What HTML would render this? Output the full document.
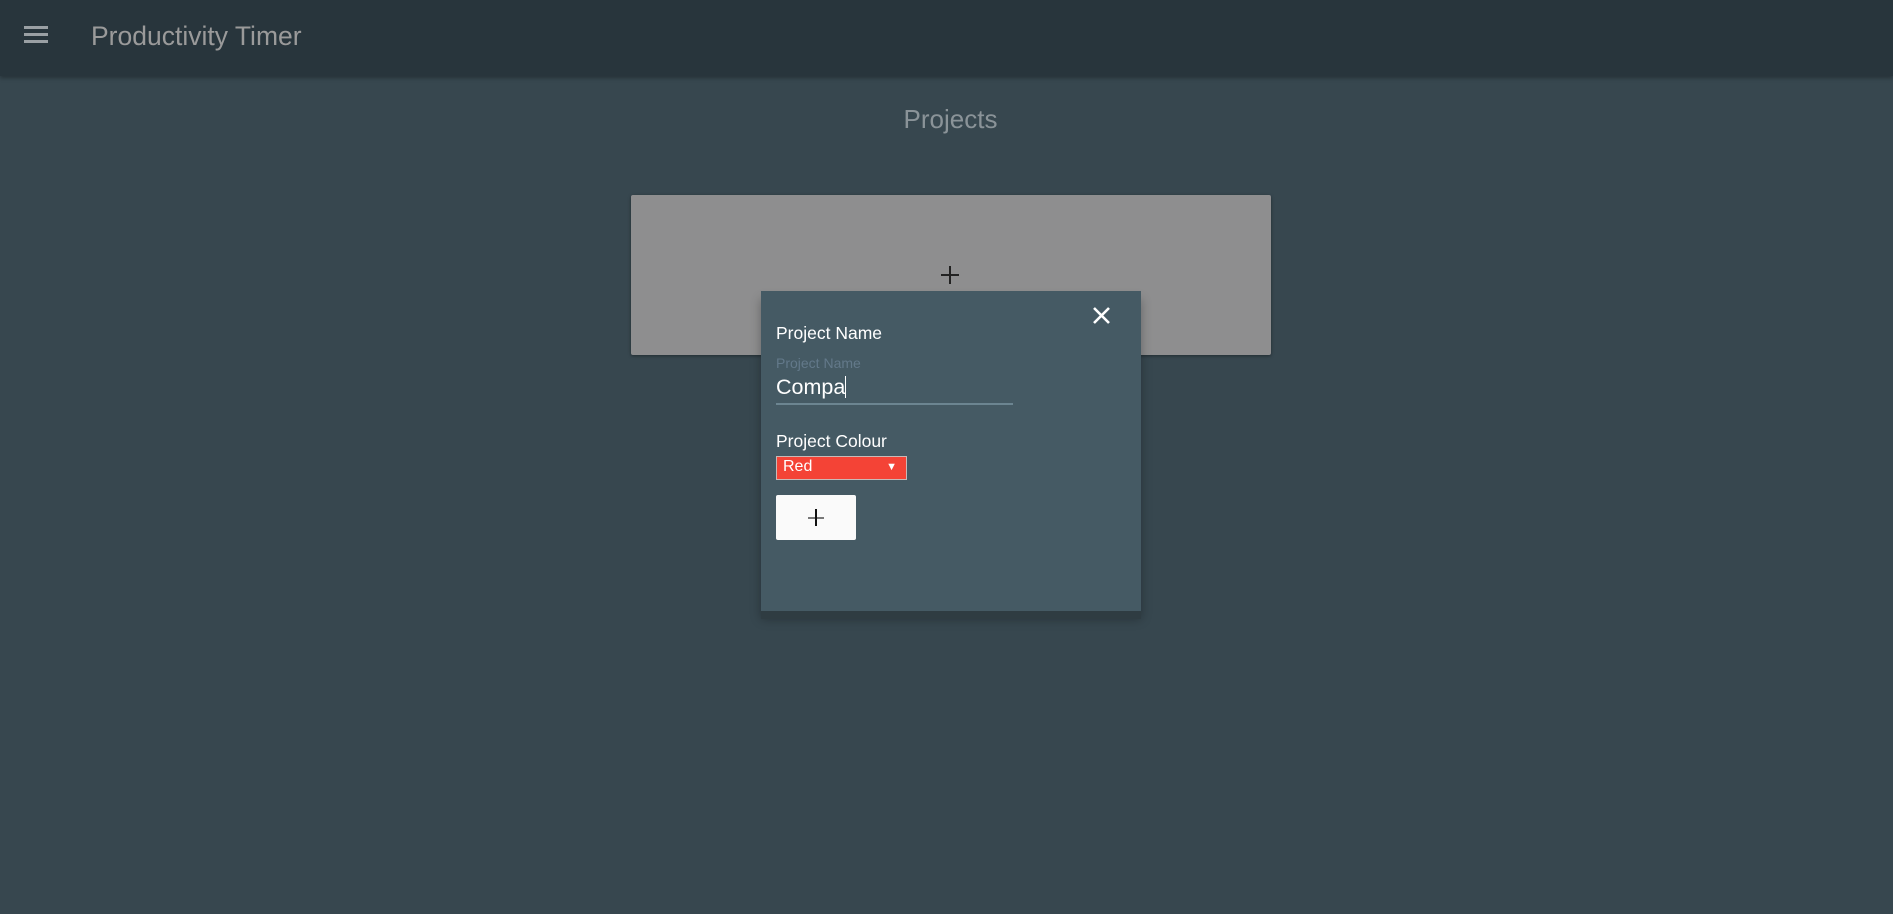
<!DOCTYPE html>
<html><head><style>
*{margin:0;padding:0;box-sizing:border-box}
body{width:1893px;height:914px;background:#37474f;font-family:"Liberation Sans",sans-serif;position:relative;overflow:hidden}
.hdr{position:absolute;left:0;top:0;width:1893px;height:76px;background:#28353c;box-shadow:0 2px 4px rgba(0,0,0,.3)}
.hb{position:absolute;left:24px;width:24px;height:3px;background:#9aa0a4}
.title{position:absolute;left:91px;top:21px;font-size:26.5px;color:#9a9a9a}
.proj{position:absolute;left:0;width:1893px;top:104px;text-align:center;font-size:26px;color:#8a9398;padding-left:8px}
.card{position:absolute;left:631px;top:195px;width:640px;height:160px;background:#8e8e8f;border-radius:2px;box-shadow:0 1px 3px rgba(0,0,0,.4)}
.plus{position:absolute;left:940px;top:265px;width:20px;height:20px}
.modal{position:absolute;left:761px;top:291px;width:380px;height:320px;background:#455a64;box-shadow:0 8px 0 0 #2f3c42,0 8px 10px rgba(0,0,0,.3)}
.lbl{position:absolute;left:15px;font-size:17.5px;color:#fff}
</style></head><body>
<div class="hdr">
<div class="hb" style="top:26px"></div><div class="hb" style="top:33px"></div><div class="hb" style="top:40px"></div>
<div class="title">Productivity Timer</div>
</div>
<div class="proj">Projects</div>
<div class="card"></div>
<svg class="plus" viewBox="0 0 20 20"><path d="M10 1v18M1 10h18" stroke="#222" stroke-width="2"/></svg>
<div class="modal">
<svg style="position:absolute;left:331px;top:15px" width="19" height="19" viewBox="0 0 19 19"><path d="M2 2L17 17M17 2L2 17" stroke="#fff" stroke-width="2.6"/></svg>
<div class="lbl" style="top:32px">Project Name</div>
<div class="lbl" style="top:64px;font-size:14px;color:#63798a">Project Name</div>
<div class="lbl" style="top:84px;font-size:21.5px">Compa<span style="display:inline-block;width:1px;height:22px;background:#fff;vertical-align:-4px"></span></div>
<div style="position:absolute;left:15px;top:112px;width:237px;height:2px;background:#6c8591"></div>
<div class="lbl" style="top:140px">Project Colour</div>
<div style="position:absolute;left:15px;top:165px;width:131px;height:24px;background:#f44336;border:1px solid #c9b9b7;color:#fff;font-size:16px;padding:1px 6px">Red<span style="position:absolute;right:9px;top:4px;font-size:11px">▼</span></div>
<div style="position:absolute;left:15px;top:204px;width:80px;height:45px;background:#fafafa;border-radius:2px">
<svg style="position:absolute;left:31px;top:13px" width="18" height="18" viewBox="0 0 18 18"><path d="M1 10h16" stroke="#222" stroke-width="1.2"/><path d="M9 1v17" stroke="#111" stroke-width="2"/></svg>
</div>
</div>
</body></html>
